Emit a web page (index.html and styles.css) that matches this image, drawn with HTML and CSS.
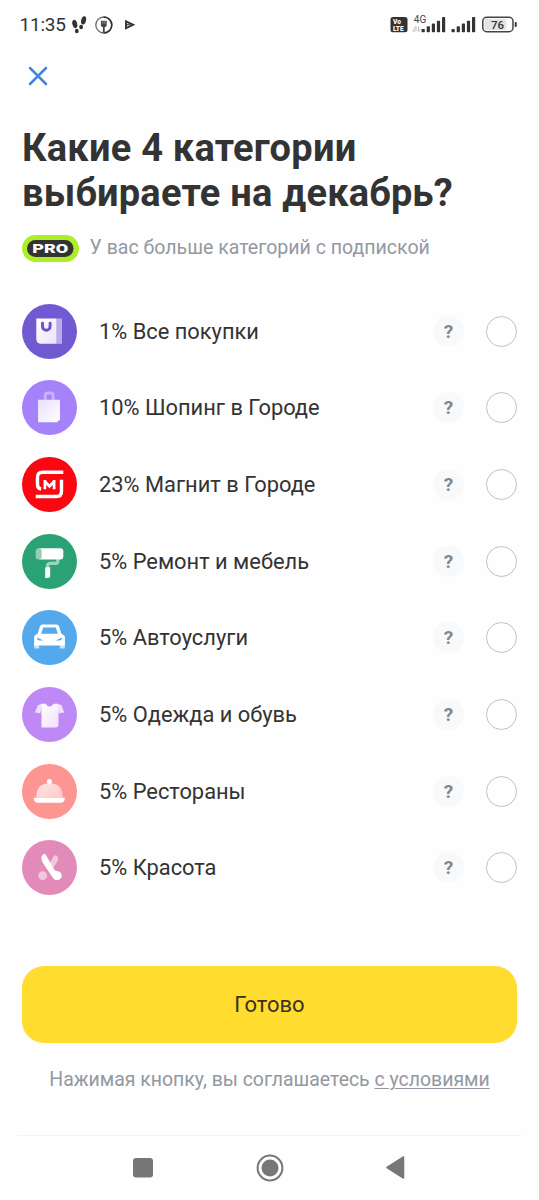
FILE: index.html
```html
<!DOCTYPE html>
<html lang="ru">
<head>
<meta charset="utf-8">
<title>Категории</title>
<link rel="stylesheet" href="styles.css">
</head>
<body>
<div class="screen">
  <header class="status">
    <span class="clock">11:35</span>
    <svg class="status-left" width="66" height="22" viewBox="0 0 66 22">
      <g fill="#333">
        <ellipse cx="2.800" cy="10" rx="2.400" ry="4.200" transform="rotate(-14 2.800 10)"/>
        <ellipse cx="4.800" cy="17" rx="1.900" ry="2.200"/>
        <ellipse cx="11.600" cy="6.300" rx="2.400" ry="4.200" transform="rotate(14 11.600 6.300)"/>
        <ellipse cx="9.100" cy="13" rx="1.900" ry="2.200"/>
      </g>
      <circle cx="31.800" cy="11" r="8" fill="none" stroke="#666" stroke-width="1.300"/>
      <path d="M31.800 3a8 8 0 0 1 0 16" fill="none" stroke="#333" stroke-width="1.600"/>
      <path d="M28.900 6.700h5.800v4.300q0 2-2 2.200v5.500h-1.800v-5.500q-2-.2-2-2.200z" fill="#444"/>
      <path d="M30.800 6.700v3.200M32.800 6.700v3.200" stroke="#bbb" stroke-width=".6"/>
      <path d="M54 7.300l7.200 3.500-7.200 3.500z" fill="none" stroke="#333" stroke-width="1.900"/>
      <path d="M53.500 10.800h5" stroke="#333" stroke-width="1.200"/>
    </svg>
    <svg class="status-right" width="128" height="22" viewBox="390 14 128 22">
      <rect x="390.500" y="17" width="17" height="15.300" rx="2.500" fill="#333"/>
      <text class="volte" x="393" y="23.800">Vo</text>
      <text class="volte" x="393" y="30.800">LTE</text>
      <text class="net" x="413.800" y="23">4G</text>
      <path d="M414 28.500v3m-1.300-1.200 1.300 1.500M416 31.500v-5l-1.500 1.700M418.500 26.500v5l1.500-2" fill="none" stroke="#aaa" stroke-width=".8"/>
      <g fill="#333">
        <rect x="421.500" y="29" width="3.300" height="3.300" rx=".8"/><rect x="426.700" y="26.300" width="3.200" height="6" rx=".8"/><rect x="431.800" y="23.600" width="3.200" height="8.700" rx=".8"/><rect x="436.900" y="20.700" width="3.200" height="11.600" rx=".8"/><rect x="442" y="17" width="3.200" height="15.300" rx=".8"/>
        <rect x="451.500" y="29" width="3.300" height="3.300" rx=".8"/><rect x="456.700" y="26.300" width="3.200" height="6" rx=".8"/><rect x="461.800" y="23.600" width="3.200" height="8.700" rx=".8"/><rect x="466.900" y="20.700" width="3.200" height="11.600" rx=".8"/><rect x="472" y="17" width="3.200" height="15.300" rx=".8"/>
        <rect x="514.800" y="22" width="1.900" height="5" rx=".8"/>
      </g>
      <rect x="484.500" y="19" width="22" height="11" rx="2" fill="#e4e4e4"/>
      <rect x="482.800" y="17.300" width="30.200" height="14.400" rx="4" fill="none" stroke="#444" stroke-width="1.500"/>
      <text class="battery" x="491" y="28.900">76</text>
    </svg>
  </header>

  <nav class="topbar">
    <svg width="20" height="20" viewBox="0 0 20 20"><path d="M2 2l16 16M18 2L2 18" stroke="#4285dc" stroke-width="2.500" stroke-linecap="round"/></svg>
  </nav>

  <main class="content">
    <h1 class="title">Какие 4 категории<br>выбираете на декабрь?</h1>
    <div class="promo">
      <span class="pro"><svg width="47" height="17" viewBox="0 0 47 17"><rect width="46.500" height="17" rx="8.500" fill="#333"/><text class="pro-text" x="5.200" y="13.200" textLength="36" lengthAdjust="spacingAndGlyphs">PRO</text></svg></span>
      <span class="promo-text">У вас больше категорий с подпиской</span>
    </div>

    <ul class="list">
      <li class="row">
        <svg class="icon" viewBox="0 0 55 55">
          <defs>
            <linearGradient id="violet" x1="0" y1="0" x2="1" y2="1"><stop offset="0" stop-color="#fff"/><stop offset="1" stop-color="#e9e3fb"/></linearGradient>
            <linearGradient id="lilac" x1="0" y1="0" x2="1" y2="1"><stop offset="0" stop-color="#e8defe"/><stop offset="1" stop-color="#fff"/></linearGradient>
            <linearGradient id="coral" x1="0" y1="0" x2="1" y2="1"><stop offset="0" stop-color="#ffe6e4"/><stop offset="1" stop-color="#ffc9c6"/></linearGradient>
            <linearGradient id="shirt" x1="0" y1="0" x2="1" y2="1"><stop offset="0" stop-color="#fff"/><stop offset="1" stop-color="#f1e0fd"/></linearGradient>
          </defs>
          <circle cx="27.500" cy="27.500" r="27.500" fill="#7159d2"/>
          <path d="M33 14.500h7v25.300h-7z" fill="#b9ace9"/><path d="M14.300 14.500h20v25.300h-16q-4-.5-4-5z" fill="url(#violet)"/>
          <path d="M20.500 19.200v3.200a3.800 3.800 0 0 0 7.600 0v-3.200" fill="none" stroke="#6951c9" stroke-width="2.900" stroke-linecap="round"/>
        </svg>
        <span class="name">1% Все покупки</span><span class="help">?</span><span class="radio"></span>
      </li>
      <li class="row">
        <svg class="icon" viewBox="0 0 55 55"><circle cx="27.500" cy="27.500" r="27.500" fill="#a581fa"/>
          <path d="M23.200 20v-4q0-3 3-3h2q3 0 3 3v4" fill="none" stroke="#c7b2fc" stroke-width="2.900"/>
          <path d="M16 19.700h22v19.500l-3 3H16z" fill="url(#lilac)"/></svg>
        <span class="name">10% Шопинг в Городе</span><span class="help">?</span><span class="radio"></span>
      </li>
      <li class="row">
        <svg class="icon" viewBox="0 0 55 55"><circle cx="27.500" cy="27.500" r="27.500" fill="#fb0712"/>
          <path d="M41.300 15.200H20.500q-5 0-5 5v7.500q0 3.800 3.700 4.300M13.700 39.500H34.500q5 0 5-5V22.700" fill="none" stroke="#fff" stroke-width="3.400"/>
          <path d="M22.900 32.300v-9.300M32.100 32.300v-9.300M22.900 24.500l4.600 4.800 4.600-4.800" fill="none" stroke="#fff" stroke-width="2.700"/></svg>
        <span class="name">23% Магнит в Городе</span><span class="help">?</span><span class="radio"></span>
      </li>
      <li class="row">
        <svg class="icon" viewBox="0 0 55 55"><circle cx="27.500" cy="27.500" r="27.500" fill="#2ba275"/>
          <path d="M35.800 25v2.500q0 1.800-2 1.800h-5.300q-3 0-3 3v3" fill="none" stroke="#9dd4be" stroke-width="3.300"/>
          <rect x="15.500" y="14.300" width="25.800" height="11.300" rx="3" fill="#fff"/><rect x="13.700" y="14.300" width="6" height="11.300" rx="3" fill="#91cfb7"/>
          <path d="M23.200 34.500q0-1.300 1.300-1.300h3.700v8.300q0 2.500-2.700 2.500h-2.300z" fill="#fff"/></svg>
        <span class="name">5% Ремонт и мебель</span><span class="help">?</span><span class="radio"></span>
      </li>
      <li class="row">
        <svg class="icon" viewBox="0 0 55 55"><circle cx="27.500" cy="27.500" r="27.500" fill="#53a9ec"/>
          <path d="M12.200 34h5v4.500h-5zM37.800 34h5v4.500h-5z" fill="#c9e4fa"/>
          <path fill-rule="evenodd" d="M20.500 14.600h14q2 0 2.600 2l2.200 7 2.800 2q.8.700.8 2v8H12.100v-8q0-1.300.8-2l2.800-2 2.200-7q.6-2 2.600-2zM21.200 17.500l-2.100 6.300h16.800l-2.100-6.300zM15.300 27.500v2l2 1h3.800zM39.700 27.500v2l-2 1h-3.800z" fill="#fff"/></svg>
        <span class="name">5% Автоуслуги</span><span class="help">?</span><span class="radio"></span>
      </li>
      <li class="row">
        <svg class="icon" viewBox="0 0 55 55"><circle cx="27.500" cy="27.500" r="27.500" fill="#bf89f5"/>
          <path d="M20 16.700l-4 1.500-3.200 7.200 5.500.8 2.200-9.500zM35.500 16.700l4 1.500 2.800 7.200-5.500.8-2.200-9.500z" fill="#f0e0fd"/>
          <path d="M19.500 16.700h4q4.200 5.500 8.200 0h4.300l.5 10v11q0 2.700-2.700 2.700H19.500v-13z" fill="url(#shirt)"/></svg>
        <span class="name">5% Одежда и обувь</span><span class="help">?</span><span class="radio"></span>
      </li>
      <li class="row">
        <svg class="icon" viewBox="0 0 55 55"><circle cx="27.500" cy="27.500" r="27.500" fill="#fd9592"/>
          <path d="M14.300 33.700q0-14.400 13.200-14.400t13.200 14.400z" fill="url(#coral)"/><circle cx="27.400" cy="17.500" r="2.500" fill="#fff"/>
          <path d="M11.700 33.700h31.200q0 5-4.500 5H16.200q-4.500 0-4.500-5z" fill="#fff"/></svg>
        <span class="name">5% Рестораны</span><span class="help">?</span><span class="radio"></span>
      </li>
      <li class="row">
        <svg class="icon" viewBox="0 0 55 55"><circle cx="27.500" cy="27.500" r="27.500" fill="#e38bb8"/>
          <g fill="#f3c8de"><circle cx="20.700" cy="35.700" r="4.400"/><path d="M31.500 16.500q1.500-2 3.200-1 1.800 1 1 5.500l-6 9-5-1.500z"/></g>
          <g fill="#fff"><circle cx="35.300" cy="35.700" r="4.400"/><path d="M23.600 14.500q-1.500-1-3.200.5-1.700 2-.4 6.500l10.300 15.500q1.600 3.100 5 3.100v-8.800q-2 0-3.200-2z"/></g></svg>
        <span class="name">5% Красота</span><span class="help">?</span><span class="radio"></span>
      </li>
    </ul>

    <button class="done">Готово</button>
    <p class="terms">Нажимая кнопку, вы соглашаетесь <a class="link">с условиями</a></p>
  </main>

  <footer class="sysnav">
    <svg width="20" height="20" viewBox="0 0 20 20"><rect width="20" height="19.500" rx="3" fill="#777"/></svg>
    <svg width="28" height="28" viewBox="0 0 28 28"><circle cx="14" cy="14" r="12.400" fill="none" stroke="#777" stroke-width="2"/><circle cx="14" cy="14" r="8.500" fill="#777"/></svg>
    <svg width="19" height="23" viewBox="0 0 19 23"><path d="M17.500 1v21L1 11.500z" fill="#777" stroke="#777" stroke-width="1.500" stroke-linejoin="round"/></svg>
  </footer>
</div>
</body>
</html>
```
FILE: styles.css
```css
* { box-sizing: border-box; }
body { margin: 0; background: #fefefe; font-family: Roboto, "Noto Sans", sans-serif; color: #333; }
.screen { width: 539px; height: 1200px; display: flex; flex-direction: column; overflow: hidden; }
.status { height: 50px; padding: 0 21px 0 19.500px; display: flex; align-items: center; flex: none; }
.clock { width: 52px; font-size: 19px; line-height: 22px; white-space: nowrap; color: #333; letter-spacing: -0.200px; }
.status svg { display: block; }
.status-right { margin-left: auto; }
.volte { font: 900 6.500px Roboto, sans-serif; fill: #fff; }
.net { font: 400 10px Roboto, sans-serif; fill: #444; }
.battery { font: 500 11.500px Roboto, sans-serif; fill: #333; }
.topbar { height: 76px; padding: 16px 28px; flex: none; }
.topbar svg { display: block; }
.content { padding: 0 22px; flex: none; }
.title { margin: 0; font-size: 38px; line-height: 44.500px; font-weight: 700; letter-spacing: 0.230px; white-space: nowrap; }
.promo { height: 28px; margin-top: 19px; display: flex; align-items: center; gap: 10.500px; }
.pro { width: 57px; height: 27px; border-radius: 14px; background: #abef24; display: flex; align-items: center; justify-content: center; flex: none; }
.pro-text { font: 900 13.500px Roboto, sans-serif; fill: #fff; }
.promo-text { font-size: 19.550px; line-height: 24px; color: #9299a2; white-space: nowrap; }
.list { list-style: none; margin: 41.500px 0 0; padding: 0; display: grid; grid-template-rows: repeat(8, 55px); row-gap: 21.700px; }
.row { display: flex; align-items: center; }
.icon { width: 55px; height: 55px; flex: none; }
.name { flex: 1; margin-left: 22px; font-size: 21.850px; line-height: 26px; white-space: nowrap; padding-top: 1px; }
.help { width: 31px; height: 31px; border-radius: 50%; background: #f7f9fa; color: #82868e; font-size: 19px; font-weight: 700; line-height: 31px; text-align: center; }
.radio { width: 31px; height: 31px; margin-left: 22px; border: 1.500px solid #c2c2c4; border-radius: 50%; }
.done { display: block; width: 495px; height: 77px; margin: 70.850px 0 0; padding: 0; border: 0; border-radius: 22px; background: #ffdc2d; color: #3b3022; font: 400 22px Roboto, sans-serif; }
.terms { margin: 25px 0 0; font-size: 19.450px; line-height: 24px; color: #9299a2; text-align: center; white-space: nowrap; }
.link { text-decoration: underline; text-decoration-thickness: 1px; text-underline-offset: 2px; }
.sysnav { height: 65px; margin: auto 18px 0; padding: 0 116px 1px 115px; border-top: 1px solid #f3f3f3; display: flex; align-items: center; justify-content: space-between; flex: none; }
```
